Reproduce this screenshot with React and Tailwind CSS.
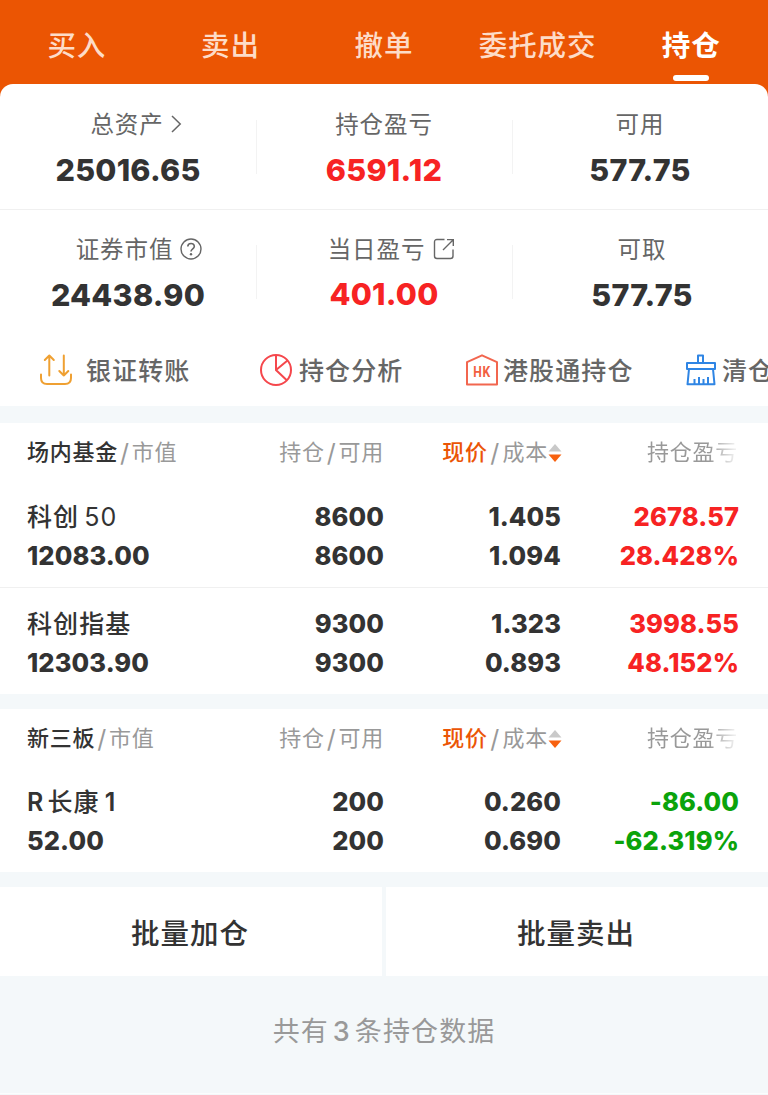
import React from "react";

const tabs = ["买入", "卖出", "撤单", "委托成交", "持仓"];

function ChevronIcon() {
  return (
    <svg width="12" height="20" viewBox="0 0 12 20" fill="none" stroke="#666" strokeWidth="1.5">
      <path d="M2 2 L10.2 10 L2 18" />
    </svg>
  );
}

function HelpIcon() {
  return (
    <svg width="22" height="22" viewBox="0 0 22 22" fill="none" stroke="#666" strokeWidth="1.4">
      <circle cx="11" cy="11" r="10" />
      <path d="M7.8 8.6 C7.8 4.4 14.3 4.5 14.3 8.4 C14.3 10.8 11 10.8 11 13.6" strokeWidth="1.6" />
      <circle cx="11" cy="16.3" r="1.2" fill="#666" stroke="none" />
    </svg>
  );
}

function ShareIcon() {
  return (
    <svg width="22" height="22" viewBox="0 0 22 22" fill="none" stroke="#666" strokeWidth="1.4">
      <path d="M11.5 1.5 H4 Q1.5 1.5 1.5 4 V18 Q1.5 20.5 4 20.5 H17.5 Q20 20.5 20 18 V11.5" />
      <path d="M10 12 L20 2 M14 1.6 H20.3 V8" />
    </svg>
  );
}

function TransferIcon() {
  return (
    <svg width="32" height="32" viewBox="0 0 32 32" fill="none" stroke="#efa032" strokeWidth="2" strokeLinecap="round" strokeLinejoin="round">
      <path d="M1 20.5 V24 Q1 30 7 30 H25 Q31 30 31 24 V20.5" />
      <path d="M9.3 21.5 V1.5 M4.8 6 L9.3 1.5 L13.8 6" />
      <path d="M23.8 1.5 V21.5 M19.3 17 L23.8 21.5 L28.3 17" />
    </svg>
  );
}

function PieIcon() {
  return (
    <svg width="32" height="32" viewBox="0 0 32 32" fill="none" stroke="#f5474c" strokeWidth="2">
      <circle cx="16" cy="16" r="15" />
      <path d="M16 1 V16 L26.8 26.3 M16 16 L27.5 6.5" />
    </svg>
  );
}

function HkIcon() {
  return (
    <svg width="32" height="32" viewBox="0 0 32 32">
      <path d="M1 8.2 L16 1.3 L31 8.2 V30.5 H1 Z" fill="none" stroke="#f2664f" strokeWidth="2" strokeLinejoin="round" />
      <text x="16.2" y="22.8" textAnchor="middle" fontFamily="Roboto, sans-serif" fontWeight="700" fontSize="15" textLength="18" lengthAdjust="spacingAndGlyphs" fill="#f2603f">
        HK
      </text>
    </svg>
  );
}

function BrushIcon() {
  return (
    <svg width="32" height="32" viewBox="0 0 32 32" fill="none" stroke="#2f85e4" strokeWidth="2" strokeLinejoin="round">
      <path d="M13 9 V1.5 H18 V9" />
      <path d="M2 9 H30 V15 H2 Z" />
      <path d="M4 15 L2.5 30.3 H29.5 L28 15" />
      <path d="M9.5 30 V25 M14 30 V23 M18.5 30 V25 M23 30 V23" />
    </svg>
  );
}

function SortIcon() {
  return (
    <svg width="14" height="20" viewBox="0 0 14 20">
      <path d="M7 1 L13.5 8.5 H0.5 Z" fill="#c9c9c9" />
      <path d="M0.5 11.5 H13.5 L7 19 Z" fill="#f7610f" />
    </svg>
  );
}

function Stat({ label, icon, value, valueClass, divider, cell = "" }) {
  return (
    <div className="relative flex flex-col items-center pt-[21px]">
      <div className={`flex h-[38px] items-center text-[23.5px] tracking-[0.9px] text-[#666] ${cell}`}>
        <span className="pt-[2px]">{label}</span>
        {icon}
      </div>
      <div className={`flex h-[54px] items-center text-[30.5px] font-extrabold tracking-[0.25px] ${valueClass}`}>{value}</div>
      {divider && <div className="absolute right-[-1px] top-[36px] h-[54px] w-px bg-[#f3f3f3]" />}
    </div>
  );
}

function GroupHeader({ name }) {
  return (
    <div className="flex h-[59px] items-center pl-[27px] text-[22px] tracking-[0.75px] text-[#999]">
      <div className="flex w-[200px] items-center">
        <span className="font-medium text-[#333]">{name}</span>
        <span className="mx-[2px] text-[25px] leading-[30px]">/</span>
        <span>市值</span>
      </div>
      <div className="flex w-[157px] items-center justify-end">
        <span>持仓</span>
        <span className="mx-[2px] text-[25px] leading-[30px]">/</span>
        <span>可用</span>
      </div>
      <div className="flex w-[178px] items-center justify-end">
        <span className="font-medium text-[#eb5505]">现价</span>
        <span className="mx-[2.5px] text-[25px] leading-[30px]">/</span>
        <span>成本</span>
        <SortIcon />
      </div>
      <div className="ml-[85px] [mask-image:linear-gradient(to_right,black_68%,transparent_102%)]">持仓盈亏</div>
    </div>
  );
}

function Holding({ name, worth, qty, usable, price, cost, profit, rate, tone }) {
  return (
    <div className="grid grid-cols-[200px_157px_177px_178px] pl-[27px] text-[25.5px] leading-[39px] font-extrabold tracking-[0.1px] text-[#333]">
      <div>
        <div className="flex h-[39px] pt-[1px] text-[25px] font-medium tracking-[1.1px]">{name}</div>
        <div>{worth}</div>
      </div>
      <div className="text-right">
        <div>{qty}</div>
        <div>{usable}</div>
      </div>
      <div className="text-right">
        <div>{price}</div>
        <div>{cost}</div>
      </div>
      <div className={`text-right ${tone}`}>
        <div>{profit}</div>
        <div>{rate}</div>
      </div>
    </div>
  );
}

export default function App() {
  return (
    <div className="h-[1095px] w-[768px] overflow-hidden bg-[#f4f8fa] font-['Inter','Noto_Sans_CJK_SC',sans-serif]">
      <div className="bg-[#eb5503]">
        <nav className="grid h-[84px] grid-cols-5">
          {tabs.map((tab, i) => (
            <div
              key={tab}
              className={
                i === 4
                  ? "flex flex-col items-center pt-[26px] text-[28.5px] leading-[40px] font-bold tracking-[0.9px] text-white"
                  : "flex flex-col items-center pt-[26px] text-[28.5px] leading-[40px] font-medium tracking-[0.9px] text-[#fddcc8]"
              }
            >
              <span className="whitespace-nowrap">{tab}</span>
              {i === 4 && <span className="mt-[9px] h-[6px] w-[36px] rounded-full bg-white" />}
            </div>
          ))}
        </nav>
        <section className="h-[322px] rounded-t-[13px] bg-white">
          <div className="grid h-[126px] grid-cols-3 border-b border-[#f0f0f0]">
            <Stat label="总资产" icon={<span className="ml-[6px]"><ChevronIcon /></span>} cell="pl-4" value="25016.65" valueClass="text-[#333]" divider />
            <Stat label="持仓盈亏" value="6591.12" valueClass="text-[#f72323]" divider />
            <Stat label="可用" value="577.75" valueClass="text-[#333]" />
          </div>
          <div className="-mt-px grid h-[126px] grid-cols-3">
            <Stat label="证券市值" icon={<span className="ml-[7px]"><HelpIcon /></span>} cell="pl-[22px]" value="24438.90" valueClass="text-[#333]" divider />
            <Stat label="当日盈亏" icon={<span className="ml-[8px]"><ShareIcon /></span>} cell="pl-[15px]" value="401.00" valueClass="pb-[2px] text-[#f72323]" divider />
            <Stat label="可取" cell="pl-1" value="577.75" valueClass="pl-1 text-[#333]" />
          </div>
          <div className="flex h-[70px] items-center overflow-hidden whitespace-nowrap pl-[40px] text-[25px] font-medium tracking-[1.1px] text-[#666]">
            <div className="flex w-[220px] shrink-0 items-center gap-[14px]"><TransferIcon /><span className="pt-[4px]">银证转账</span></div>
            <div className="flex w-[206px] shrink-0 items-center gap-[7px]"><PieIcon /><span className="pt-[4px]">持仓分析</span></div>
            <div className="flex w-[219px] shrink-0 items-center gap-[5px]"><HkIcon /><span className="pt-[4px]">港股通持仓</span></div>
            <div className="flex shrink-0 items-center gap-[5px]"><BrushIcon /><span className="pt-[4px]">清仓</span></div>
          </div>
        </section>
      </div>

      <section className="mt-[17px] h-[271px] bg-white">
        <GroupHeader name="场内基金" />
        <div className="h-[106px] border-b border-[#f0f0f0] pt-[15px]">
          <Holding name={<><span>科创</span><span className="ml-[5px] font-normal">50</span></>} worth="12083.00" qty="8600" usable="8600" price="1.405" cost="1.094" profit="2678.57" rate="28.428%" tone="text-[#f72323]" />
        </div>
        <div className="pt-[16px]">
          <Holding name="科创指基" worth="12303.90" qty="9300" usable="9300" price="1.323" cost="0.893" profit="3998.55" rate="48.152%" tone="text-[#f72323]" />
        </div>
      </section>

      <section className="mt-[15px] h-[163px] bg-white">
        <GroupHeader name="新三板" />
        <div className="pt-[14px]">
          <Holding name={<><span className="font-semibold">R</span><span className="mr-[5px] ml-[3px]">长康</span><span className="font-semibold">1</span></>} worth="52.00" qty="200" usable="200" price="0.260" cost="0.690" profit="-86.00" rate="-62.319%" tone="text-[#0ba30b]" />
        </div>
      </section>

      <div className="mt-[15px] grid h-[89px] grid-cols-2 gap-[4px] text-[28.5px] font-medium tracking-[1px] text-[#333]">
        <button className="bg-white pt-[6px] pr-[2px]">批量加仓</button>
        <button className="bg-white pt-[6px] pr-[2px]">批量卖出</button>
      </div>

      <footer className="flex h-[118px] items-center justify-center border-b border-[#fcfdfd] pb-[4px] text-[27px] tracking-[1.1px] text-[#999]">
        <span>共有</span>
        <span className="mx-[4px] font-medium">3</span>
        <span>条持仓数据</span>
      </footer>
    </div>
  );
}
